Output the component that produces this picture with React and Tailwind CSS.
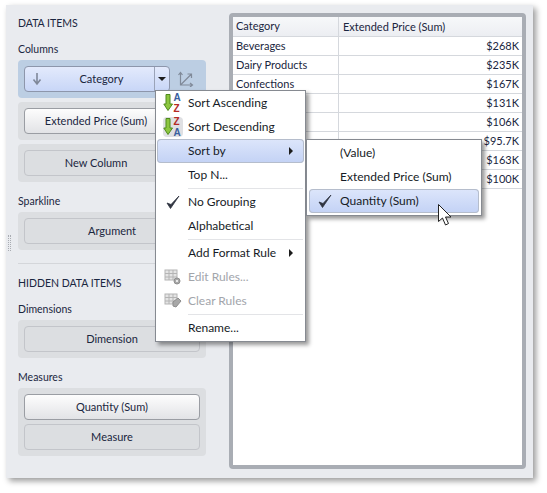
const font = { fontFamily: 'Lato, "Open Sans", sans-serif' }

const rows = [
  ['Beverages', '$268K'],
  ['Dairy Products', '$235K'],
  ['Confections', '$167K'],
  ['', '$131K'],
  ['', '$106K'],
  ['', '$95.7K'],
  ['', '$163K'],
  ['', '$100K'],
]

function SortIcon({ top, bottom, boxed }) {
  return (
    <svg width="20" height="20" viewBox="0 0 20 20" className={boxed ? 'bg-[#dfe0e3] rounded-sm' : ''}>
      <path d="M3 1.5h4v9.5h2.5l-4.5 6.5L.8 11H3z" fill="#8cc63f" stroke="#4f8a1c" strokeWidth="1" />
      <text x="10.5" y="8" fontSize="10" fontWeight="700" fontFamily="Liberation Sans" fill={top === 'A' ? '#3a5f9e' : '#b52a25'}>{top}</text>
      <text x="10.5" y="19" fontSize="10" fontWeight="700" fontFamily="Liberation Sans" fill={bottom === 'A' ? '#3a5f9e' : '#b52a25'}>{bottom}</text>
    </svg>
  )
}

function GridIcon({ children }) {
  return (
    <svg width="18" height="16" viewBox="0 0 18 16">
      <rect x="1" y="1" width="12" height="10" fill="#e4e4e4" stroke="#b4b4b4" />
      <path d="M1 4.5h12M1 8h12M5 1v10M9 1v10" stroke="#b4b4b4" />
      {children}
    </svg>
  )
}

function Check() {
  return (
    <svg width="16" height="16" viewBox="0 0 16 16">
      <path d="M2 9l3.5 5.5L14 2 6 10.5z" fill="#2f3440" stroke="#2f3440" strokeWidth="0.8" strokeLinejoin="round" />
    </svg>
  )
}

function Arrow() {
  return <span className="ml-auto mr-[11px] w-0 h-0 border-y-[4px] border-y-transparent border-l-[4px] border-l-[#1c1c1c]" />
}

function MenuItem({ icon, label, active, disabled, arrow }) {
  return (
    <div className={`flex items-center h-6 mx-px rounded-sm ${active ? 'bg-gradient-to-b from-[#dde6fb] to-[#c3d2f5] shadow-[inset_0_0_0_1px_#b5bdcc]' : ''} ${disabled ? 'text-[#a2a5ab]' : 'text-[#161b26]'}`}>
      <div className="w-[31px] flex justify-center items-center shrink-0">{icon}</div>
      <span>{label}</span>
      {arrow && <Arrow />}
    </div>
  )
}

function Sep() {
  return <div className="h-[3px] ml-[32px] mr-[2px] flex items-center"><div className="h-px w-full bg-[#e3e4e7]" /></div>
}

function FieldButton({ label, empty, pad = '' }) {
  return (
    <div className={`h-[26px] rounded-sm flex items-center justify-center border text-[11px] text-[#1a2640] ${empty ? 'border-[#c3c5ca] bg-[#dcdee1]' : 'border-[#9a9da3] bg-gradient-to-b from-[#fdfdfd] to-[#e2e3e6]'} ${pad}`}>
      {label}
    </div>
  )
}

function Well({ children }) {
  return <div className="rounded-sm p-[6px] flex flex-col gap-1 w-[188px] bg-[#dcdee1]">{children}</div>
}

function Heading({ children, className = '' }) {
  return <div className={`h-[16px] leading-[16px] text-[10.5px] text-[#1a2640] ${className}`}>{children}</div>
}

export default function App() {
  return (
    <div className="relative w-[547px] h-[493px] bg-white overflow-hidden text-[12px]" style={font}>
      <div className="absolute left-[6px] top-[5px] w-[527px] h-[473px] bg-[#e9ebef] shadow-[3px_3px_6px_rgba(0,0,0,0.4)] flex">
        <div className="relative w-[223px] shrink-0 pl-[12px] pt-[10px]">
          <Heading>DATA ITEMS</Heading>
          <Heading className="mt-[10px] mb-[3px]">Columns</Heading>
          <div className="flex flex-col gap-1">
            <div className="rounded-sm bg-[#bccee3] w-[188px] h-[38px] pl-[6px] pt-[6px] flex items-start">
              <div className="w-[146px] h-[26px] rounded-sm border border-[#8d96ab] bg-gradient-to-b from-[#e3eafc] to-[#c8d6f7] flex items-center text-[11px] text-[#1a2640]">
                <svg width="12" height="14" viewBox="0 0 12 14" className="ml-[6px] shrink-0">
                  <path d="M6 1v10M2.5 7.5L6 12l3.5-4.5" fill="none" stroke="#7f8899" strokeWidth="1.6" />
                </svg>
                <span className="flex-1 text-center pl-[6px]">Category</span>
                <div className="w-[15px] h-full border-l border-[#9aa3b8] flex items-center justify-center">
                  <span className="w-0 h-0 border-x-[4px] border-x-transparent border-t-[4px] border-t-[#1c1c1c]" />
                </div>
              </div>
              <svg width="16" height="16" viewBox="0 0 16 16" className="ml-[8px] mt-[5px]">
                <path d="M2.5 2v12h12M2.5 14L13 3.5M9.5 3h4v4M.5 4l2-2.5 2 2.5M12 12l2.5 2-2.5 2" fill="none" stroke="#808a99" strokeWidth="1.2" />
              </svg>
            </div>
            <Well><FieldButton label="Extended Price (Sum)" pad="pr-[32px]" /></Well>
            <Well><FieldButton label="New Column" empty pad="pr-[32px]" /></Well>
          </div>
          <Heading className="mt-[11px] mb-[3px]">Sparkline</Heading>
          <Well><FieldButton label="Argument" empty /></Well>
          <div className="h-px bg-[#d4d6da] w-[188px] mt-[13px] mb-[11px]" />
          <Heading>HIDDEN DATA ITEMS</Heading>
          <Heading className="mt-[10px] mb-[3px]">Dimensions</Heading>
          <Well><FieldButton label="Dimension" empty /></Well>
          <Heading className="mt-[11px] mb-[3px]">Measures</Heading>
          <Well>
            <FieldButton label="Quantity (Sum)" />
            <FieldButton label="Measure" empty />
          </Well>
          <div className="absolute left-[2px] top-[230px] w-[3px] h-[16px] border-x border-dotted border-[#a9acb2]" />
        </div>
        <div className="w-[297px] h-[456px] mt-[8px] rounded-sm border-[4px] border-[#a9adb4] bg-white text-[11px] text-[#1a2640]">
          <div className="flex h-[20px] items-center bg-gradient-to-b from-[#f7f8fa] to-[#eceef2] border-b border-[#d5d8dd]">
            <div className="w-[106px] pl-[3px] border-r border-[#d5d8dd] h-full leading-[18px]">Category</div>
            <div className="pl-[4px] leading-[18px]">Extended Price (Sum)</div>
          </div>
          {rows.map(([name, value]) => (
            <div key={value} className="flex h-[19px] border-b border-[#d5d8dd] leading-[18px]">
              <div className="w-[106px] pl-[3px] border-r border-[#d5d8dd]">{name}</div>
              <div className="flex-1 text-right pr-[3px]">{value}</div>
            </div>
          ))}
        </div>
      </div>

      {/* context menu */}
      <div className="absolute left-[155px] top-[90px] w-[151px] h-[252px] bg-white border border-[#868a91] shadow-[3px_3px_4px_rgba(0,0,0,0.4)]">
        <MenuItem icon={<SortIcon top="A" bottom="Z" />} label="Sort Ascending" />
        <MenuItem icon={<SortIcon top="Z" bottom="A" boxed />} label="Sort Descending" />
        <MenuItem label="Sort by" active arrow />
        <MenuItem label="Top N..." />
        <Sep />
        <MenuItem icon={<Check />} label="No Grouping" />
        <MenuItem label="Alphabetical" />
        <Sep />
        <MenuItem label="Add Format Rule" arrow />
        <MenuItem
          disabled
          label="Edit Rules..."
          icon={<GridIcon><circle cx="13" cy="12" r="3" fill="#a8a8a8" stroke="#8e8e8e" /><circle cx="13" cy="12" r="1" fill="#fff" /></GridIcon>}
        />
        <MenuItem
          disabled
          label="Clear Rules"
          icon={<GridIcon><path d="M9 9l5-4 3 3-5 6-3-1z" fill="#a8a8a8" stroke="#8e8e8e" /></GridIcon>}
        />
        <Sep />
        <MenuItem label="Rename..." />
      </div>

      {/* sort by submenu */}
      <div className="absolute left-[306px] top-[139px] w-[176px] h-[77px] bg-white border border-[#868a91] py-px px-px shadow-[3px_3px_4px_rgba(0,0,0,0.4)]">
        <MenuItem label="(Value)" />
        <MenuItem label="Extended Price (Sum)" />
        <MenuItem icon={<Check />} label="Quantity (Sum)" active />
      </div>

      <svg width="16" height="24" viewBox="0 0 16 24" className="absolute left-[437px] top-[203px]">
        <path d="M1.5 1.5v17l4-3.5 3 7 3-1.5-3-6.5h5.5z" fill="#fff" stroke="#222" strokeWidth="1" strokeLinejoin="round" />
      </svg>
    </div>
  )
}
